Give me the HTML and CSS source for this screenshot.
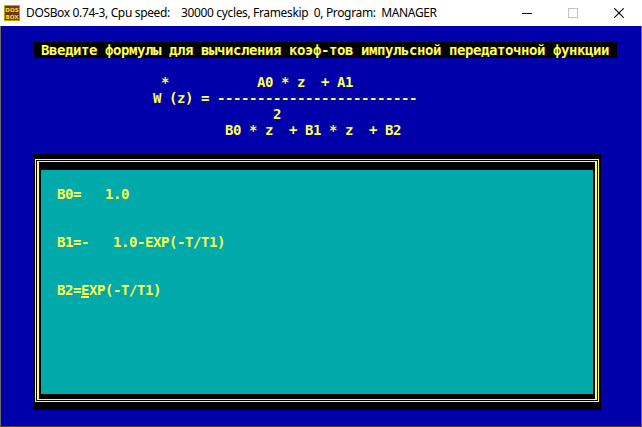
FILE: index.html
```html
<!DOCTYPE html>
<html lang="ru">
<head>
<meta charset="utf-8">
<title>DOSBox</title>
<link rel="stylesheet" href="styles.css">
</head>
<body>
<div class="window">
  <div class="titlebar">
    <svg class="appicon" width="16" height="16" viewBox="0 0 16 16">
      <rect x="0" y="0" width="16" height="16" fill="#c8a000"/>
      <rect x="1" y="1" width="14" height="14" fill="#6a3a00"/>
      <text x="8" y="7" text-anchor="middle" font-family="DejaVu Sans" font-weight="bold" font-size="5.6" fill="#ffd84a">DOS</text>
      <text x="8" y="13.5" text-anchor="middle" font-family="DejaVu Sans" font-weight="bold" font-size="5.6" fill="#ffd84a">BOX</text>
    </svg>
    <div class="title">DOSBox 0.74-3, Cpu speed:    30000 cycles, Frameskip  0, Program:  MANAGER</div>
    <div class="controls">
      <div class="ctl">
        <svg width="10" height="10" viewBox="0 0 10 10"><path d="M0 5.5h10" stroke="#000" stroke-width="1"/></svg>
      </div>
      <div class="ctl">
        <svg width="10" height="10" viewBox="0 0 10 10"><rect x="0.5" y="0.5" width="9" height="9" fill="none" stroke="#c4c4c4" stroke-width="1"/></svg>
      </div>
      <div class="ctl">
        <svg width="10" height="10" viewBox="0 0 10 10"><path d="M0.3 0.3L9.7 9.7M9.7 0.3L0.3 9.7" stroke="#000" stroke-width="1.1"/></svg>
      </div>
    </div>
  </div>
  <div class="screen">
    <div class="row"></div>
    <div class="row"><span class="hdr"> Введите формулы для вычисления коэф-тов импульсной передаточной функции </span></div>
    <div class="row"></div>
    <div class="row">                    *           A0 * z  + A1</div>
    <div class="row">                   W (z) = -------------------------</div>
    <div class="row">                                  2</div>
    <div class="row">                            B0 * z  + B1 * z  + B2</div>
    <div class="row"></div>
    <div class="box">
      <div class="frame-outer">
        <div class="frame-inner">
          <div class="panel">
            <div class="row"></div>
            <div class="row">  B0=   1.0</div>
            <div class="row"></div>
            <div class="row"></div>
            <div class="row">  B1=-   1.0-EXP(-T/T1)</div>
            <div class="row"></div>
            <div class="row"></div>
            <div class="row">  B2=<span class="cur">E</span>XP(-T/T1)</div>
          </div>
        </div>
      </div>
    </div>
  </div>
  <div class="strip"></div>
</div>
</body>
</html>
```
FILE: styles.css
```css
html, body {
  margin: 0;
  padding: 0;
}
body {
  width: 642px;
  height: 427px;
  overflow: hidden;
  background: #6c6c6c;
}
.window {
  display: flex;
  flex-direction: column;
  width: 642px;
}
.titlebar {
  height: 26px;
  background: #ffffff;
  display: flex;
  align-items: center;
}
.appicon {
  flex: none;
  margin-left: 4px;
}
.title {
  flex: 1;
  margin-left: 6px;
  font-family: "Noto Sans", "Open Sans", sans-serif;
  font-size: 12px;
  letter-spacing: -0.35px;
  color: #000;
  white-space: pre;
  line-height: 26px;
}
.controls {
  display: flex;
  height: 26px;
}
.ctl {
  width: 46px;
  height: 26px;
  display: flex;
  align-items: center;
  justify-content: center;
}
.screen {
  margin-left: 1px;
  width: 640px;
  height: 400px;
  background: #0000aa;
  color: #ffff55;
  font-family: "DejaVu Sans Mono", "Liberation Mono", monospace;
  font-weight: bold;
  font-size: 14px;
  letter-spacing: -0.43px;
  line-height: 16px;
}
.row {
  height: 16px;
  white-space: pre;
}
.hdr {
  display: inline-block;
  height: 16px;
  vertical-align: top;
  margin-left: 32px;
  background: #000;
}
.box {
  margin-left: 32px;
  width: 568px;
  height: 256px;
  box-sizing: border-box;
  background: #000;
  padding: 5px 2px 8px 2px;
}
.frame-outer {
  height: 100%;
  box-sizing: border-box;
  border: 1px solid #ffff55;
  padding: 1px;
}
.frame-inner {
  height: 100%;
  box-sizing: border-box;
  border-style: solid;
  border-color: #ffff55;
  border-width: 1px 2px;
  padding: 8px 2px 5px 2px;
}
.panel {
  height: 100%;
  background: #00aaaa;
}
.cur {
  display: inline-block;
  height: 16px;
  vertical-align: top;
  background: linear-gradient(#ffff55, #ffff55) left bottom / 100% 2px no-repeat;
}
.strip {
  height: 1px;
  background: #5a3c3c;
}
```
